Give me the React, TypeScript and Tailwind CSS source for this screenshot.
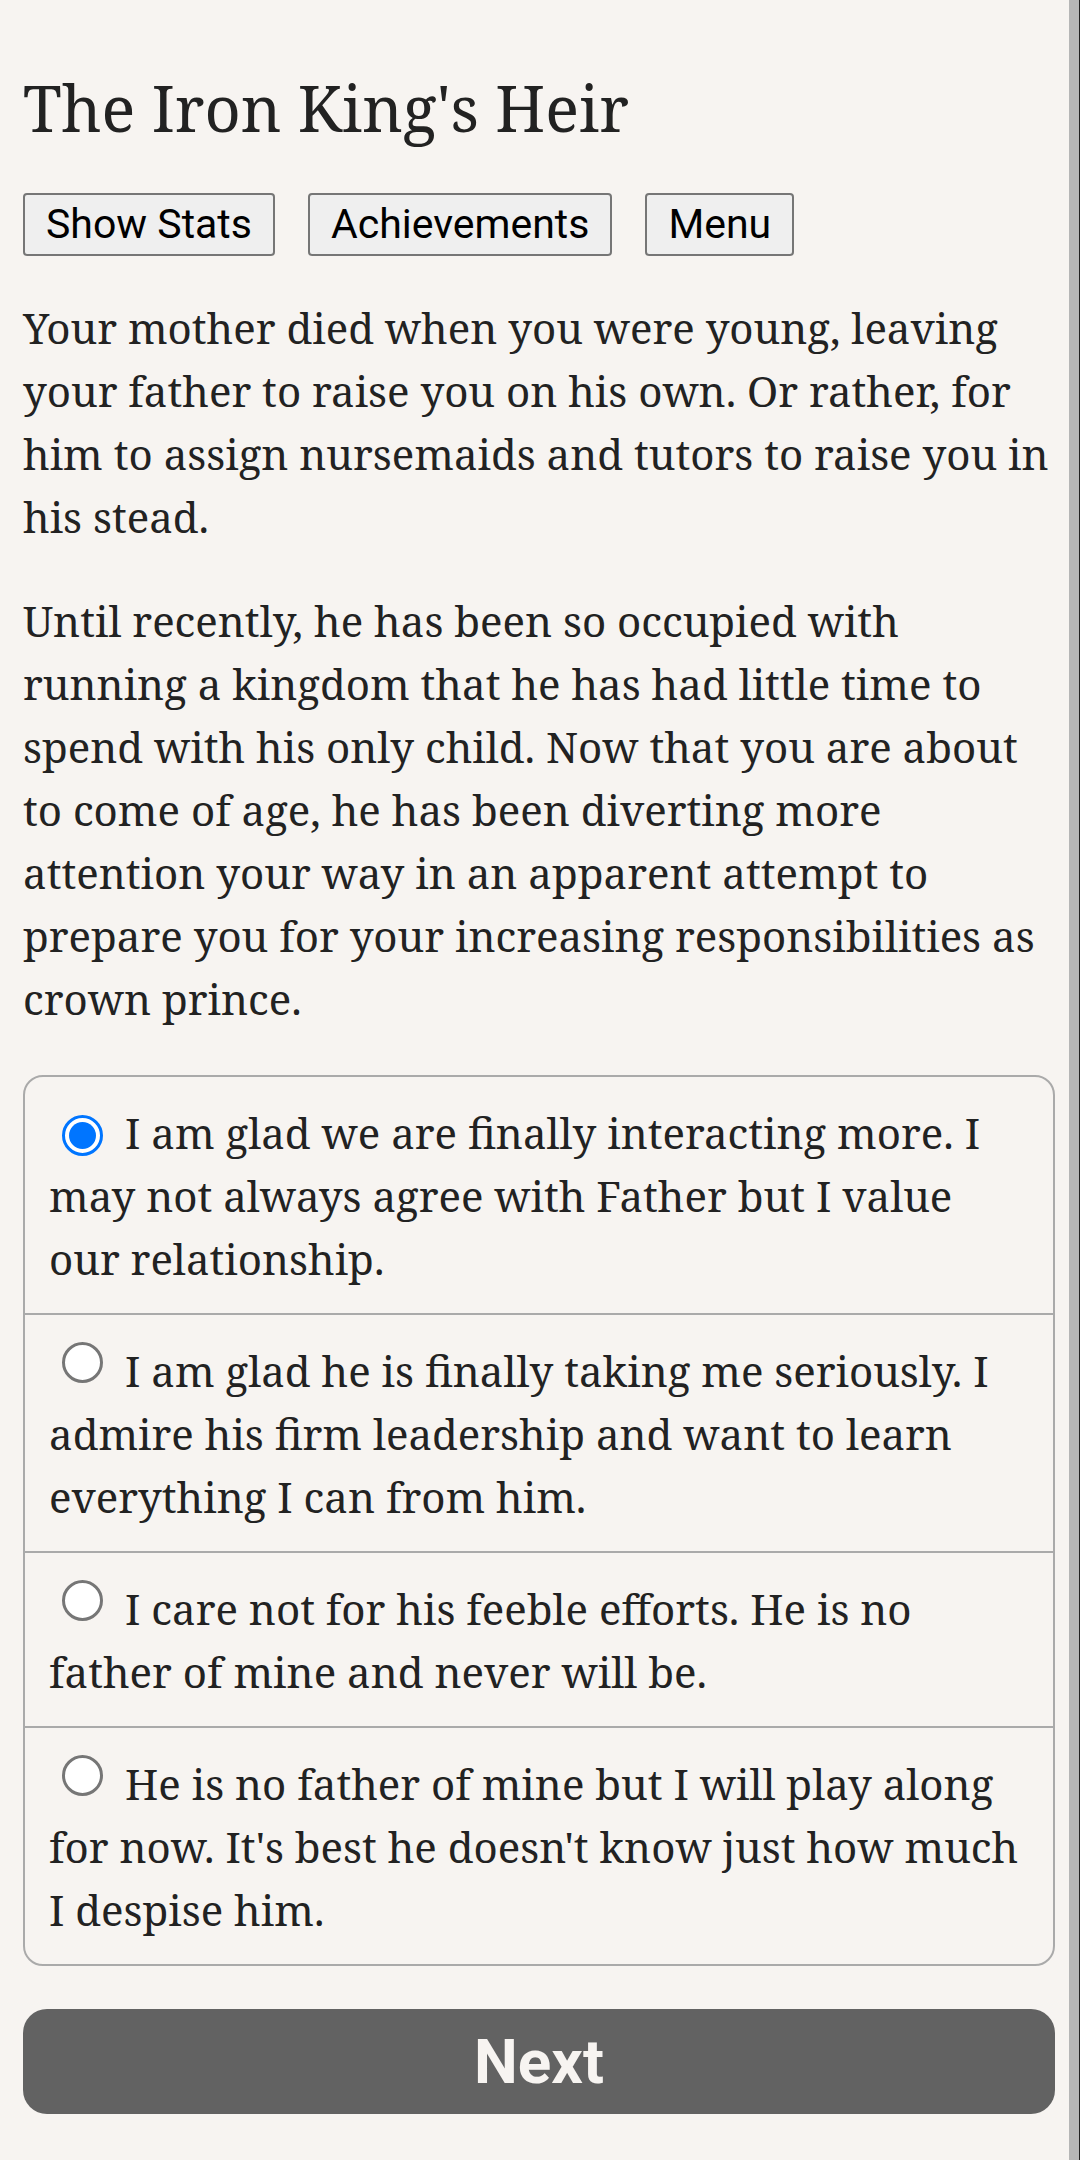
import { useState } from 'react';

const choices = [
  'I am glad we are finally interacting more. I may not always agree with Father but I value our relationship.',
  'I am glad he is finally taking me seriously. I admire his firm leadership and want to learn everything I can from him.',
  'I care not for his feeble efforts. He is no father of mine and never will be.',
  "He is no father of mine but I will play along for now. It's best he doesn't know just how much I despise him.",
];

function Radio({ checked }: { checked: boolean }) {
  if (checked) {
    return (
      <span className="inline-flex items-center justify-center w-[41px] h-[41px] rounded-full border-[3px] border-[#0075ff] bg-white align-baseline mb-[4px] ml-[13px] mr-[22px]">
        <span className="w-[27px] h-[27px] rounded-full bg-[#0075ff]" />
      </span>
    );
  }
  return (
    <span className="inline-block w-[41px] h-[41px] rounded-full border-[3px] border-[#767676] bg-white align-baseline mb-[4px] ml-[13px] mr-[22px]" />
  );
}

export default function App() {
  const [selected, setSelected] = useState(0);

  return (
    <div className="min-h-screen flex bg-[#f7f4f1] text-[#222222]">
      <div className="flex-1 pl-[23px] pr-[14px]" style={{ fontFamily: '"Noto Serif", "DejaVu Serif", serif' }}>
        <h1 className="mt-[68px] text-[63px] leading-[80px] font-normal">The Iron King's Heir</h1>

        {/* top buttons */}
        <div className="mt-[45px] flex gap-[33px] font-['Roboto',sans-serif]">
          {['Show Stats', 'Achievements', 'Menu'].map(label => (
            <button
              key={label}
              type="button"
              className="h-[63px] px-[21px] text-[41px] leading-none text-black bg-[#efefef] border-2 border-[#767676] rounded-[4px]"
            >
              {label}
            </button>
          ))}
        </div>

        <div className="mt-[40px] text-[42px] leading-[63px]">
          <p>
            Your mother died when you were young, leaving your father to raise you on his own. Or rather, for him to
            assign nursemaids and tutors to raise you in his stead.
          </p>
          <p className="mt-[41px]">
            Until recently, he has been so occupied with running a kingdom that he has had little time to spend with
            his only child. Now that you are about to come of age, he has been diverting more attention your way in an
            apparent attempt to prepare you for your increasing responsibilities as crown prince.
          </p>
        </div>

        {/* choices */}
        <div className="mt-[45px] border-2 border-[#aaaaaa] rounded-[20px] text-[42px] leading-[63px]">
          {choices.map((c, idx) => (
            <div
              key={idx}
              onClick={() => setSelected(idx)}
              className={`px-[24px] pt-[24px] pb-[23px] cursor-pointer ${idx > 0 ? 'border-t-2 border-[#aaaaaa]' : ''}`}
            >
              <Radio checked={selected === idx} />
              {c}
            </div>
          ))}
        </div>

        <button
          type="button"
          className="mt-[43px] w-full h-[105px] rounded-[24px] bg-[#626262] text-[#f7f4f1] text-[62px] font-bold font-['Roboto',sans-serif]"
        >
          Next
        </button>
      </div>
      <div className="w-[11px] bg-[#b6b6b6] border-r border-[#222222]" />
    </div>
  );
}
